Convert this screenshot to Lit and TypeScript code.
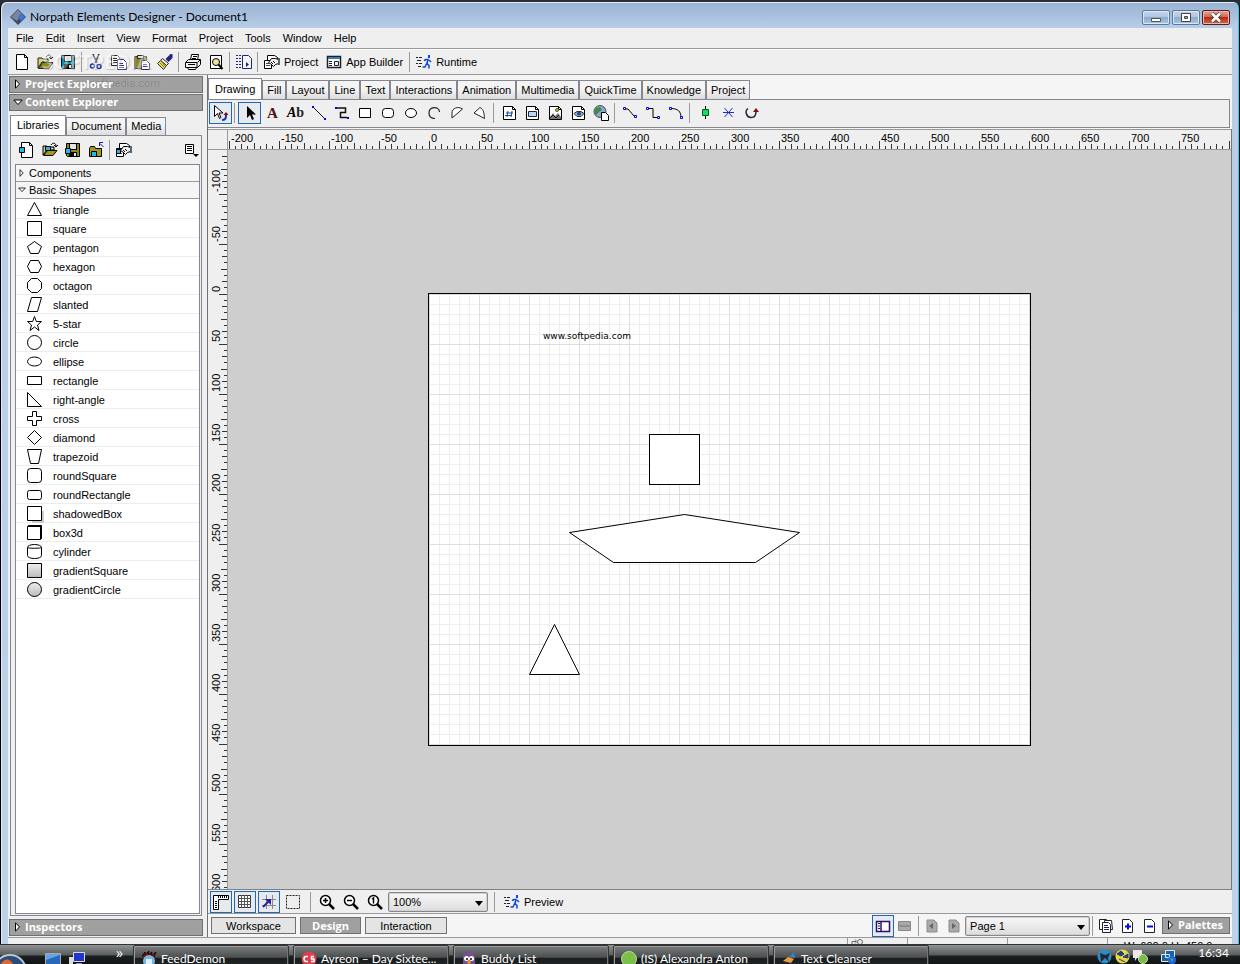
import { LitElement, html, svg, css } from "lit";
import { customElement, property } from "lit/decorators.js";

const page = svg`<path d="M2.5 .5h8l3 3v12h-11z" fill="#fff" stroke="#000"/><path d="M10.5 .5v3h3" fill="none" stroke="#000"/>`;
const floppy = (side: string) => svg`<path d="M1.500 1.500h13v13h-12l-1-1z" fill=${side} stroke="#000"/><path d="M4 1h8v7H4z" fill="#000"/><path d="M5 2h6v5H5z" fill="#e4e4e4"/><path d="M4 10h8v5H4z" fill="#000"/><path d="M9 11h2v3H9z" fill="#e4e4e4"/>`;
const lens = svg`<circle cx="6.5" cy="6.5" r="5" fill="#fff" stroke="#000" stroke-width="1.5"/><path d="M10 10l5 5" stroke="#000" stroke-width="2.5"/>`;
const runner = svg`<path d="M0 3.5h2m1 0h3M1 6.5h4M0 9.5h2m1 0h3M2 12.5h3" stroke="#222"/><path d="M12 1h2v3h-2z" fill="#0a46d8"/><path d="M8 6.500l2-1h2l-1 4 2 2v3M11 9l-2 4H6.500M13 6l2 2" fill="none" stroke="#0a46d8" stroke-width="1.500"/>`;
const handPages = svg`<path d="M3.500 6V1.500h7l3 2V9" fill="#fff" stroke="#000"/><path d="M.5 6.500h7v8h-7z" fill="#fff" stroke="#000"/><path d="M2 9.500h3M2 11.500h4" stroke="#444"/><path d="M4.500 8.500l3-4h4l3 1v4l-3 1-2 2-2-2z" fill="#eee" stroke="#000"/><path d="M7 8l2 2M9 7l2 2" stroke="#000"/><path d="M14 4h2v7h-2z" fill="#4a6a7c"/>`;
const sheet = svg`<path d="M2.500 1.500h9l3 3v10h-12z" fill="#fff" stroke="#000"/><path d="M11.500 1.500v3h3" fill="none" stroke="#000"/>`;

const ICONS: Record<string, unknown> = {
  newDoc: page,
  open: svg`<path d="M1 14V4h4l1 1h5v3H5z" fill="#d9cf75" stroke="#222"/><path d="M1.500 14.500l4-6H16l-4 6z" fill="#8a8a1c" stroke="#222"/><path d="M9 3c2-3 5-2 5 1m-2-1l2 2 2-2" fill="none" stroke="#000"/>`,
  save: floppy("#0b8ea5"),
  cut: svg`<path d="M5 0l4 9M11 0L7 9" stroke="#223" stroke-width="1.500" fill="none"/><circle cx="4.500" cy="12" r="2" fill="none" stroke="#2030a8" stroke-width="1.500"/><circle cx="11" cy="12.500" r="2" fill="none" stroke="#2030a8" stroke-width="1.500"/>`,
  copy: svg`<path d="M.5 1.500h6l2 2v8h-8z" fill="#fff" stroke="#222"/><path d="M2 4.500h4M2 6.500h4M2 8.500h4" stroke="#222"/><path d="M6.500 5.500h6l3 3v7h-9z" fill="#fff" stroke="#24247c"/><path d="M8 9.500h4M8 11.500h5M8 13.500h5" stroke="#24247c"/>`,
  paste: svg`<path d="M.5 2.500h12v12H.5z" fill="#8c8426" stroke="#333"/><path d="M3.500 1.500h6v3h-6z" fill="#ddd" stroke="#222"/><path d="M7.500 6.500h5l3 3v6h-8z" fill="#fff" stroke="#24247c"/><path d="M9 10.500h4M9 12.500h5" stroke="#24247c"/>`,
  brush: svg`<path d="M15.500 0v4l-4 4-3-3 5-5z" fill="#24247c"/><path d="M5.500 4.500l6 5-2 2-6-5z" fill="#eee" stroke="#222"/><path d="M3.500 6.500l6 5-3 4-6-6z" fill="#e8dc4c" stroke="#333"/><path d="M3 9l4 4M5 8l3 4" stroke="#8a8020"/>`,
  print: svg`<path d="M5.500 6.500l1-6h7l-1 6z" fill="#fff" stroke="#000"/><path d="M8 2.500h4M7 4.500h4" stroke="#000"/><path d="M.5 8.500l3-3h12v5l-3 3H.5z" fill="#f2f2f2" stroke="#000"/><path d="M1 8.500h11v5M12.500 8.500l3-3M3 10.500h7" fill="none" stroke="#000"/><path d="M2.500 13.500h9l-1 2h-7z" fill="#fff" stroke="#000"/>`,
  preview: svg`<path d="M2.500 1.500h11v13h-11z" fill="#fff" stroke="#000"/><circle cx="8" cy="8" r="3.500" fill="#e9e4a0" stroke="#000"/><path d="M10.500 10.500l4 4.500" stroke="#000" stroke-width="2"/>`,
  pages: svg`<path d="M0 1.500h6M0 4.500h6M0 7.500h6M0 10.500h6M0 13.500h6" stroke="#1b2a6b" stroke-dasharray="2 1"/><path d="M6.500 1.500h6l3 3v10h-9z" fill="#f3f5fb" stroke="#1b2a6b"/><path d="M10 8v5l3-2.500z" fill="#1b2a6b"/>`,
  project: handPages,
  appBuilder: svg`<path d="M1.500 2.500h13v11h-13z" fill="#fff" stroke="#16202e" stroke-width="1.500"/><path d="M2 4h12" stroke="#3c78a8" stroke-width="2"/><path d="M3 7.500h3M3 9.500h3M3 11.500h3" stroke="#222"/><path d="M8.500 7.500h4v4h-4z" fill="#eee" stroke="#222"/>`,
  runtime: runner,
  multi: svg`<path d="M1.500 .5v11l3-3 2 5 1.500-1-2-4.500h4z" fill="#fff" stroke="#000"/><path d="M9 15c4 0 4-2 4-6" fill="none" stroke="#1a2ca8" stroke-width="2"/><path d="M10.500 10L13 7l2.500 3z" fill="#7a1010"/>`,
  arrow: svg`<path d="M5 1v12l3-3 2 5 2-1-2-4.500h4z" fill="#000"/>`,
  line: svg`<path d="M2 2l12 12" stroke="#111"/><path d="M1 1h2v2H1zM13 13h2v2h-2z" fill="#00e"/>`,
  poly: svg`<path d="M2 3h9.500v4.500h-5v5H13" fill="none" stroke="#111" stroke-width="1.500"/><path d="M1 2h2v2H1zM13 12h2v2h-2z" fill="#00e"/>`,
  rect: svg`<path d="M2.500 3.500h11v9h-11z" fill="#fff" stroke="#000"/>`,
  rrect: svg`<rect x="2.500" y="3.500" width="11" height="9" rx="3" fill="#fff" stroke="#000"/>`,
  ellipse: svg`<ellipse cx="8" cy="8" rx="5.500" ry="4.500" fill="#fff" stroke="#000"/>`,
  arc: svg`<path d="M13.500 7c0-6-10.500-6-10.500 1 0 4 3 5.500 6 5.500" fill="none" stroke="#222" stroke-width="1.200"/>`,
  pie: svg`<path d="M3 13V8c0-5 6-7 10.500-4z" fill="#fff" stroke="#222"/>`,
  wedge: svg`<path d="M2 8l6-5.500c4 2 4 6 4.500 11z" fill="#fff" stroke="#222"/>`,
  hash: svg`${sheet}<path d="M7 6l-1 6M11 6l-1 6M5 8h7M4 10.500h7" stroke="#1c4d94"/>`,
  frame: svg`${sheet}<path d="M4.500 6.500h8v5h-8z" fill="#b9d6f2" stroke="#1b2a40"/>`,
  image: svg`${sheet}<path d="M3 12l3-4 2 3 3-3 3 4v2H3z" fill="#777"/><circle cx="10" cy="5" r="1.500" fill="#e8d400" stroke="#554"/><path d="M3 13l3-3 3 3 3-3" stroke="#111" fill="none"/>`,
  media: svg`${sheet}<path d="M4 8.500l3-2h4l3 2-3 3H7z" fill="#8cb89c" stroke="#333"/><circle cx="9" cy="8.500" r="2" fill="#2446b8"/>`,
  web: svg`<circle cx="7" cy="6.500" r="6" fill="#8ca8c8" stroke="#44525c"/><path d="M3 3l4-1 2 3-3 2-3 3-2-3zM9 8l3-1-2 4z" fill="#3d8a4c"/><path d="M8.500 7.500h4l3 3v5h-7z" fill="#fff" stroke="#000"/>`,
  connect1: svg`<path d="M3 4h3l6 7h2" fill="none" stroke="#000"/><path d="M1.500 2.500h2v2h-2zM12.500 10.500h2v2h-2z" fill="#fff" stroke="#00e"/>`,
  connect2: svg`<path d="M3 3.500h5v9h5" fill="none" stroke="#000"/><path d="M1.500 2.500h2v2h-2zM12.500 11.500h2v2h-2z" fill="#fff" stroke="#00e"/>`,
  connect3: svg`<path d="M3 3.500c7 0 10 3 10 9" fill="none" stroke="#000"/><path d="M1.500 2.500h2v2h-2zM12.500 11.500h2v2h-2z" fill="#fff" stroke="#00e"/>`,
  nodeGreen: svg`<path d="M8.500 1v13" stroke="#000"/><path d="M5.500 4.500h6v6h-6z" fill="#0be060" stroke="#035a24"/>`,
  star: svg`<path d="M3 7.500h11M4.500 3l8 9m0-9l-8 9" stroke="#1a2cc8"/>`,
  rotate: svg`<path d="M5 3.500c-4 3-1 9 3 9s5-3 5-6" fill="none" stroke="#33203c" stroke-width="1.500"/><path d="M10 7l3-4 3 4z" fill="#7a1010"/>`,
  libNew: svg`${page}<path d="M.5 5.500h5v5h-5z" fill="#22b8e8" stroke="#000"/>`,
  libOpen: svg`<path d="M1 13V4h4l1 1h6v3H5z" fill="#d9cf75" stroke="#000"/><path d="M1.500 13.500l4-5H15l-4 5z" fill="#a09a1c" stroke="#000"/><path d="M9 3c2-3 5-2 5 1m-2-1l2 2 2-2" fill="none" stroke="#000"/><path d="M3.500 4.500h5v4h-5z" fill="#22b8e8" stroke="#000"/>`,
  libSave: svg`${floppy("#8a8a1c")}<path d="M.5 6.500h5v5h-5z" fill="#22b8e8" stroke="#000"/>`,
  libUp: svg`<path d="M1.500 6.500l1-2h4l1 2h6v8h-12z" fill="#a09a1c" stroke="#000"/><path d="M3.500 9.500h5v5h-5z" fill="#22b8e8" stroke="#000"/><path d="M15.500 5L12 1.500M11.500 4V.5H15" fill="none" stroke="#1a1aa8"/>`,
  libProject: svg`${handPages}<path d="M.5 7.500h4v4h-4z" fill="#22b8e8" stroke="#000"/>`,
  options: svg`<path d="M2.500 2.500h8v9h-8z" fill="#fff" stroke="#000"/><path d="M4 4.500h5M4 6.500h5M4 8.500h5" stroke="#000"/><path d="M10 12h6l-3 3z" fill="#000"/>`,
  rulers: svg`<path d="M.5 1.500h15v4h-10v10h-5z" fill="#fff" stroke="#000"/><path d="M5.500 2v2m2-2v2m2-2v2m2-2v2m2-2v2M2 7.500h2M2 9.500h2M2 11.500h2M2 13.500h2" stroke="#000"/>`,
  grid: svg`<path d="M1.500 1.500h12v12h-12z" fill="#fff" stroke="#333"/><path d="M4.500 1v13m3-13v13m3-13v13M1 4.500h13M1 7.500h13M1 10.500h13" stroke="#555"/>`,
  snap: svg`<path d="M5.500 1v14M11.500 1v14M1 5.500h14M1 11.500h14" stroke="#888"/><path d="M2 13l7-7" stroke="#2a1fa0" stroke-width="2"/><path d="M4 5h6v6z" fill="#2a1fa0"/>`,
  dotted: svg`<path d="M1.500 1.500h13v13h-13z" fill="none" stroke="#222" stroke-dasharray="2 1"/>`,
  zoomIn: svg`${lens}<path d="M4 6.500h5M6.500 4v5" stroke="#000" stroke-width="1.500"/>`,
  zoomOut: svg`${lens}<path d="M4 6.500h5" stroke="#000" stroke-width="1.500"/>`,
  zoomOne: svg`${lens}<path d="M5 5l1.500-1v5.500" fill="none" stroke="#000" stroke-width="1.500"/>`,
  split: svg`<path d="M1.500 3.500h13v10h-13z" fill="#fff" stroke="#2d0f68" stroke-width="1.500"/><path d="M6 3v11" stroke="#2d0f68" stroke-width="1.500"/><path d="M3 5.500h2M3 8h2M3 10.500h2" stroke="#2d0f68"/>`,
  stack: svg`<path d="M1.500 3.500h12v9h-12z" fill="#aaa" stroke="#888"/><path d="M2 8h11" stroke="#777"/>`,
  prevPage: svg`<path d="M3 2h7l3 3v9H3z" fill="#aaa" stroke="#8c8c8c"/><path d="M9 5v6L5 8z" fill="#666"/>`,
  nextPage: svg`<path d="M3 2h7l3 3v9H3z" fill="#aaa" stroke="#8c8c8c"/><path d="M6 5v6l4-3z" fill="#666"/>`,
  dupPage: svg`<path d="M1.500 1.500h7v10h-7z" fill="#fff" stroke="#222"/><path d="M6.500 2.500h7l1 9h-8z" fill="#fff" stroke="#222"/><path d="M4.500 4.500h6l2 2v8h-8z" fill="#fff" stroke="#222"/><path d="M6 7.500h4M6 9.500h5M6 11.500h5" stroke="#1a1a90"/>`,
  addPage: svg`<path d="M2.500 1.500h7l3 3v10h-10z" fill="#fff" stroke="#222"/><path d="M5 8.500h6M8 5.500v6" stroke="#0a0ad0" stroke-width="2"/>`,
  delPage: svg`<path d="M2.500 1.500h7l3 3v10h-10z" fill="#fff" stroke="#222"/><path d="M5 8.500h6" stroke="#0a0ad0" stroke-width="2"/>`,
  tri: svg`<path d="M7.500 .5l7 13H.5z"/>`,
  square: svg`<path d="M.5 .5h14v14H.5z"/>`,
  pentagon: svg`<path d="M7.500 1.500l7 5-3 7h-8l-3-7z"/>`,
  hexagon: svg`<path d="M3.500 1.500h8l3 6-3 6h-8l-3-6z"/>`,
  octagon: svg`<path d="M4.500 .5h6l4 4v6l-4 4h-6l-4-4v-6z"/>`,
  slanted: svg`<path d="M4.500 .5h10l-4 14H.5z"/>`,
  fiveStar: svg`<path d="M7.500 .5l1.800 5h5.200l-4 3.500 1.500 5.500-4.500-3.500-4.500 3.500 1.500-5.500-4-3.500h5.200z"/>`,
  circle: svg`<circle cx="7.500" cy="7.500" r="7"/>`,
  oval: svg`<ellipse cx="7.500" cy="7.500" rx="7" ry="4.500"/>`,
  rectangle: svg`<path d="M.5 3.500h14v8H.5z"/>`,
  rightAngle: svg`<path d="M.5 .5l14 14H.5z"/>`,
  cross: svg`<path d="M5.500 .5h4v5h5v4h-5v5h-4v-5h-5v-4h5z"/>`,
  diamond: svg`<path d="M7.500 .5l7 7-7 7-7-7z"/>`,
  trapezoid: svg`<path d="M.5 .5h14l-3 14h-8z"/>`,
  roundSquare: svg`<rect x=".5" y=".5" width="14" height="14" rx="3"/>`,
  roundRect: svg`<rect x=".5" y="3.500" width="14" height="9" rx="2"/>`,
  shadowed: svg`<path d="M5 5h12v12H5z" fill="#ccc" stroke="none"/><path d="M.5 .5h14v14H.5z"/>`,
  box3d: svg`<path d="M.5 1.500l1-1h13v13l-1 1H.5z" fill="#000"/><path d="M1 2h12v12H1z" stroke="none"/>`,
  cylinder: svg`<path d="M.5 3.500c0-4 14-4 14 0v8c0 4-14 4-14 0z"/><path d="M.5 3.500c0 1 14 1 14 0" fill="none"/>`,
  gradSquare: svg`<defs><linearGradient id="a" x2="0" y2="1"><stop stop-color="#eee"/><stop offset="1" stop-color="#bbb"/></linearGradient></defs><path d="M.5 .5h14v14H.5z" fill="url(#a)"/>`,
  gradCircle: svg`<defs><linearGradient id="b" x2="0" y2="1"><stop stop-color="#eee"/><stop offset="1" stop-color="#bbb"/></linearGradient></defs><circle cx="7.500" cy="7.500" r="7" fill="url(#b)"/>`,
};

const icon = (name: string) =>
  html`<svg class="icon" viewBox="0 0 16 16" aria-hidden="true">${ICONS[name]}</svg>`;

const tool = (name: string, label: string, pressed = false) =>
  html`<button class="tool ${pressed ? "pressed" : ""}" aria-label=${label} title=${label}>${icon(name)}</button>`;

const sep = html`<span class="sep"></span>`;

const right = html`<svg class="chevron" viewBox="0 0 8 10" aria-hidden="true"><path d="M1.500 .8v8.400L5.500 5z"/></svg>`;
const down = html`<svg class="chevron wide" viewBox="0 0 10 7" aria-hidden="true"><path d="M.8 1h8.400L5 5.500z"/></svg>`;

const base = css`
  * { box-sizing: border-box; }
  button, select { font: inherit; color: inherit; margin: 0; padding: 0; border: 0; background: none; border-radius: 0; }
  .icon { width: 16px; height: 16px; display: block; flex: none; }
  .tool { width: 23px; height: 22px; display: flex; align-items: center; justify-content: center; flex: none; }
  .pressed { border: 1px solid #1c6ab4; background: #e6eaef; }
  .sep { width: 1px; height: 20px; background: #999; margin: 0 2px; flex: none; }
  .chevron { width: 8px; height: 10px; fill: #fff; stroke: #000; flex: none; }
  .wide { width: 10px; height: 7px; margin: 0 -1px; }
  .bar-head { display: flex; align-items: center; gap: 3px; height: 17px; padding: 0 4px 1px; background: #a0a0a0;
    border: 1px solid #707070; color: #fff; font: bold 11px/14px "Open Sans", sans-serif; white-space: nowrap; text-align: left; }
  .tabs { display: flex; align-items: flex-end; }
  .tab { height: 19px; padding: 0 4px; border: 1px solid #868690; border-bottom: 0; white-space: nowrap;
    background: linear-gradient(#f4f4f4 45%, #dcdcdc); line-height: 18px; }
  .tab.on { height: 21px; background: #fff; padding: 0 6px; }
`;

@customElement("side-panel")
class SidePanel extends LitElement {
  static styles = [base, css`
    :host { display: flex; flex-direction: column; width: 199px; flex: none; padding: 1px 4px 1px 1px; gap: 1px; background: #efefef; }
    .stamp { position: absolute; left: 54px; top: 49px; font: 11px/14px Roboto, sans-serif; color: #858585; text-shadow: 0 0 1px #bbb; pointer-events: none; }
    .head-text { position: relative; z-index: 1; }
    .libs { flex: 1; min-height: 0; display: flex; flex-direction: column; padding: 3px 1px 2px; }
    .tab { height: 18px; line-height: 17px; }
    .tab.on { height: 20px; }
    .box { flex: 1; min-height: 0; display: flex; flex-direction: column; border: 1px solid #868690; padding: 3px 1px 1px 4px; }
    .tools { display: flex; align-items: center; height: 22px; margin-bottom: 3px; }
    .tools .sep { margin: 0 2px; }
    .end { margin-left: auto; margin-right: -2px; }
    .tree { flex: 1; min-height: 0; overflow: hidden; border: 1px solid #868690; background: #fff; margin: 0; padding: 0; list-style: none; }
    .group { display: flex; align-items: center; gap: 3px; width: 100%; height: 17px; padding: 0 2px; border-bottom: 1px solid #999; background: #f5f5f5; text-align: left; }
    .group .chevron { width: 8px; height: 8px; margin: 0; }
    .items { list-style: none; margin: 0; padding: 1px 0 0; }
    .item { display: flex; align-items: center; gap: 10px; height: 19px; padding: 2px 10px 0; border-bottom: 1px solid #ededf0; }
    .shape { width: 17px; height: 17px; margin-bottom: 2px; fill: #fff; stroke: #000; flex: none; overflow: visible; }
  `];

  private shapes: [string, string][] = [
    ["tri", "triangle"], ["square", "square"], ["pentagon", "pentagon"], ["hexagon", "hexagon"], ["octagon", "octagon"],
    ["slanted", "slanted"], ["fiveStar", "5-star"], ["circle", "circle"], ["oval", "ellipse"], ["rectangle", "rectangle"],
    ["rightAngle", "right-angle"], ["cross", "cross"], ["diamond", "diamond"], ["trapezoid", "trapezoid"],
    ["roundSquare", "roundSquare"], ["roundRect", "roundRectangle"], ["shadowed", "shadowedBox"], ["box3d", "box3d"],
    ["cylinder", "cylinder"], ["gradSquare", "gradientSquare"], ["gradCircle", "gradientCircle"],
  ];

  render() {
    return html`
      <button class="bar-head">${right}<span class="head-text">Project Explorer</span></button>
      <span class="stamp">www.softpedia.com</span>
      <button class="bar-head">${down}Content Explorer</button>
      <div class="libs">
        <div class="tabs">
          <button class="tab on">Libraries</button><button class="tab">Document</button><button class="tab">Media</button>
        </div>
        <div class="box">
          <div class="tools">
            ${tool("libNew", "New library")}${tool("libOpen", "Open library")}${tool("libSave", "Save library")}${tool("libUp", "Close library")}
            ${sep}${tool("libProject", "Library project")}
            <button class="tool end" aria-label="Options">${icon("options")}</button>
          </div>
          <ul class="tree">
            <li><button class="group">${right}Components</button></li>
            <li><button class="group">${down}Basic Shapes</button>
              <ul class="items">
                ${this.shapes.map(([i, name]) => html`<li class="item"><svg class="shape" viewBox="-1 -1 17 17" aria-hidden="true">${ICONS[i]}</svg>${name}</li>`)}
              </ul>
            </li>
          </ul>
        </div>
      </div>
      <button class="bar-head">${right}Inspectors</button>
    `;
  }
}

@customElement("ruler-strip")
class RulerStrip extends LitElement {
  @property({ type: Boolean }) vertical = false;
  @property({ type: Number }) origin = 0;
  @property({ type: Number }) from = 0;
  @property({ type: Number }) to = 0;

  static styles = css`
    :host { display: block; overflow: hidden; background: #efefef; }
    .scale { display: block; width: 100%; height: 100%; }
    .num { font: 11px "Liberation Sans", sans-serif; fill: #000; }
    .tick { stroke: #333; shape-rendering: crispEdges; }
  `;

  render() {
    const ticks = [];
    const first = Math.ceil(this.from / 6.25);
    const last = Math.floor(this.to / 6.25);
    for (let k = first; k <= last; k++) {
      const len = k % 8 === 0 ? 8 : k % 4 === 0 ? 6 : k % 2 === 0 ? 5 : 3;
      const p = this.origin + Math.floor(k * 6.25) + 0.5;
      ticks.push(this.vertical
        ? svg`<line class="tick" x1=${19 - len} x2="19" y1=${p} y2=${p}/>`
        : svg`<line class="tick" y1=${19 - len} y2="19" x1=${p} x2=${p}/>`);
    }
    const labels = [];
    for (let v = Math.ceil(this.from / 50) * 50; v <= Math.min(this.to, this.vertical ? 600 : 750); v += 50) {
      const p = this.origin + v;
      labels.push(this.vertical
        ? svg`<text class="num" transform="translate(12 ${p - 2}) rotate(-90)">${v}</text>`
        : svg`<text class="num" x=${p + 2} y="12">${v}</text>`);
    }
    return html`<svg class="scale">${ticks}${labels}</svg>`;
  }
}

@customElement("drawing-area")
class DrawingArea extends LitElement {
  static styles = [base, css`
    :host { display: grid; grid-template: 21px 1fr / 20px 1fr; flex: 1; min-height: 0; border-right: 1px solid #777; border-bottom: 1px solid #808080; overflow: hidden; }
    .corner, .top { border-top: 1px solid #999; border-bottom: 1px solid #999; background: #efefef; }
    .corner, .left { border-right: 1px solid #999; }
    .desk { background: #cecece; overflow: hidden; min-height: 0; }
    .sheet { margin: 143px 0 0 200px; width: 603px; height: 453px; border: 1px solid #000; background-color: #fff;
      background-image: linear-gradient(90deg, #dedede 1px, transparent 1px), linear-gradient(#dedede 1px, transparent 1px),
        linear-gradient(90deg, #eeeeee 1px, transparent 1px), linear-gradient(#eeeeee 1px, transparent 1px);
      background-size: 50px 50px, 50px 50px, 10px 10px, 10px 10px; }
    .art { display: block; width: 601px; height: 451px; fill: #fff; stroke: #000; }
    .note { font: 9px "DejaVu Sans", sans-serif; fill: #000; stroke: none; }
  `];
  render() {
    return html`
      <div class="corner"></div>
      <ruler-strip class="top" .origin=${201} .from=${-200} .to=${800}></ruler-strip>
      <ruler-strip class="left" vertical .origin=${144} .from=${-143} .to=${600}></ruler-strip>
      <div class="desk">
        <div class="sheet">
          <svg class="art">
            <text class="note" x="114" y="45">www.softpedia.com</text>
            <rect x="220.500" y="140.500" width="50" height="50"/>
            <path d="M140.500 238.500L255.500 220.500L370.500 238.500L326.500 268.500H184.500z"/>
            <path d="M125.500 330.500L150.500 380.500H100.500z"/>
          </svg>
        </div>
      </div>`;
  }
}

@customElement("task-bar")
class TaskBar extends LitElement {
  static styles = [base, css`
    :host { display: flex; height: 20px; flex: none; overflow: hidden; border-top: 1px solid #333; color: #fff; align-items: flex-start;
      font: 12px/16px Lato, sans-serif; background: linear-gradient(#909394, #5c5f60 50%, #1b1f20 60%, #101414); }
    .start { width: 45px; height: 19px; flex: none; text-align: left; }
    .quick { width: 88px; display: flex; gap: 8px; padding-top: 6px; flex: none; }
    .more { margin: -5px 0 0 23px; font: 14px/14px "Open Sans", sans-serif; }
    .tasks { display: flex; gap: 4px; flex: 1; min-width: 0; }
    .task { width: 156px; height: 30px; display: flex; align-items: flex-start; gap: 4px; padding: 5px 7px; white-space: nowrap; border: 1px solid #333; border-radius: 2px;
      box-shadow: inset 1px 1px 0 #9a9d9e, inset -1px 0 0 #777; background: linear-gradient(#7b7e7f, #4c4f50 40%, #191d1e 45%, #2c2f30); }
    .glyph { display: block; flex: none; }
    .tray { display: flex; gap: 3px; padding-top: 4px; margin-right: 22px; }
    .gap { width: 7px; }
    .clock { padding: 0 11px 0 0; }
  `];
  private tasks: [string, unknown][] = [
    ["FeedDemon", svg`<path d="M1 5l3-4v3l4-4-1 4 4-3-1 4 5-4-2 5z" fill="#a01818" stroke="#200"/><circle cx="8" cy="10" r="6" fill="#78b8dc"/><path d="M5 8h6v5H5z" fill="#dff0fa"/>`],
    ["Ayreon – Day Sixtee...", svg`<circle cx="8" cy="8" r="7.500" fill="#dc4050"/><path d="M7 5.500H5a2 2.500 0 000 5h2M13 5.500h-2.500v2.500H13v2.500H10" stroke="#fff" fill="none" stroke-width="1.500"/>`],
    ["Buddy List", svg`<path d="M2 16V5c0-6 12-6 12 0v11z" fill="#74508c"/><circle cx="5.500" cy="7.500" r="2.500" fill="#fff"/><circle cx="10.500" cy="7.500" r="2.500" fill="#fff"/><circle cx="6" cy="8" r="1"/><circle cx="10" cy="8" r="1"/><path d="M6 11l2-2 2 2-2 3z" fill="#e8982c"/>`],
    ["(IS) Alexandra Anton", svg`<circle cx="8" cy="8" r="7.500" fill="#7cc04c" stroke="#b8e090"/>`],
    ["Text Cleanser", svg`<path d="M8 6l5-5 1 6z" fill="#3c80c8"/><path d="M2 10l5-4 6 2-3 4z" fill="#ec9c3c"/><path d="M2 12h10v2z" fill="#102860"/>`],
  ];
  render() {
    return html`
      <button class="start" aria-label="Start"><svg class="glyph" width="28" height="20" viewBox="0 0 28 20"><circle cx="10" cy="26" r="16" fill="#2c4c78" stroke="#b8c4d0" stroke-width="2"/><path d="M1 19c3-6 9-6 12 0z" fill="#e06830"/></svg></button>
      <div class="quick">
        <svg class="glyph" width="16" height="16" viewBox="0 0 16 16"><path d="M.5 2.500h15v12H.5z" fill="#2868b8" stroke="#aaa"/><path d="M1 9l14-5v-1H1z" fill="#64a4e8"/></svg>
        <svg class="glyph" width="16" height="16" viewBox="0 0 16 16"><path d="M4.500 1.500h11v9h-11z" fill="#1c38d0" stroke="#ddd"/><path d="M0 6h4v8H0z" fill="#ddd"/><path d="M7 12h6v3H7z" fill="#999"/></svg>
        <span class="more">»</span>
      </div>
      <div class="tasks">
        ${this.tasks.map(([name, art]) => html`<button class="task"><svg class="glyph" width="16" height="16" viewBox="0 0 16 16">${art}</svg>${name}</button>`)}
      </div>
      <div class="tray">
        <svg class="glyph" width="15" height="15" viewBox="0 0 15 15"><circle cx="7.500" cy="7.500" r="7" fill="#2c8cc8"/><path d="M3 4l5 2 5-2-2 5 1 4-4-4-4 4z" fill="#202830"/></svg>
        <svg class="glyph" width="15" height="15" viewBox="0 0 15 15"><circle cx="7.500" cy="7.500" r="7" fill="#e8d83c"/><path d="M2 5l4-3 3 3-3 2zM8 8l5-3v4zM4 10l6 3" fill="#203c8c" stroke="#203c8c"/></svg>
        <svg class="glyph" width="15" height="15" viewBox="0 0 15 15"><path d="M0 1h9v8H4l-2 3V9H0z" fill="#e8e8e8"/><circle cx="10" cy="10" r="4.500" fill="#78bc4c" stroke="#c4e4a8"/></svg>
        <span class="gap"></span>
        <svg class="glyph" width="15" height="15" viewBox="0 0 15 15"><path d="M4.500 1.500h9v7h-9zM.5 5.500h8v7h-8z" fill="#1464a8" stroke="#e0e8f0"/><circle cx="11" cy="11" r="4" fill="#2464dc"/><path d="M9 9l3 1-1 3z" fill="#3cc04c"/></svg>
      </div>
      <time class="clock">16:34</time>`;
  }
}

@customElement("app-root")
class AppRoot extends LitElement {
  static styles = [base, css`
    :host { display: flex; flex-direction: column; height: 100vh; overflow: hidden; background: #2c2c34; color: #000; font: 11px/14px "Liberation Sans", Arial, sans-serif; }
    .window { flex: 1; min-height: 0; display: flex; flex-direction: column; margin-top: 2px; border-left: 1px solid #000; border-right: 1px solid #000;
      border-radius: 6px 6px 0 0; background: linear-gradient(#98b2d2, #b8cee8 26px, #bcd2eb); box-shadow: inset -1px 0 0 #22d0f0, inset 1px 1px 0 #dfeaf6; padding: 0 7px; }
    .title { display: flex; align-items: center; height: 26px; flex: none; gap: 4px; padding: 4px 2px 0; font: 12px/18px Lato, sans-serif; }
    .title h1 { font: inherit; margin: 0; flex: 1; }
    .logo { width: 16px; height: 16px; }
    .winbtns { display: flex; gap: 2px; }
    .wb { width: 28px; height: 15px; border: 1px solid #5d7796; border-radius: 2px; background: linear-gradient(#c3d5ea, #b0c6e0 45%, #8daccf 50%, #a9c6e4); box-shadow: inset 0 0 0 1px #dbe8f5; display: grid; place-items: center; }
    .close { background: linear-gradient(#e2a596, #cf6a55 45%, #b52a12 50%, #cf6a4c); border-color: #5c1a18; box-shadow: inset 0 0 0 1px #eab8ac; }
    .body { flex: 1; min-height: 0; display: flex; flex-direction: column; background: #efefef; position: relative; }
    .menu { display: flex; height: 21px; padding: 0 2px; border-bottom: 1px solid #999; flex: none; }
    .menu button { padding: 0 6px; height: 20px; }
    .toolbar { display: flex; align-items: center; height: 26px; padding: 1px 2px; border-bottom: 1px solid #999; box-shadow: inset 0 1px 0 #fff; flex: none; }
    .texttool { display: flex; align-items: center; gap: 4px; padding: 0 4px; white-space: nowrap; }
    .mark { position: absolute; left: 34px; top: 23px; font: bold 20px/22px "Open Sans", sans-serif; color: #fff; opacity: .4; text-shadow: 1px 1px 1px #888; pointer-events: none; }
    .main { flex: 1; min-height: 0; display: flex; }
    .work { flex: 1; min-width: 0; display: flex; flex-direction: column; border-left: 1px solid #707070; background: #f5f5f5; }
    .work .tabs { padding-top: 3px; height: 24px; flex: none; }
    .draw { display: flex; align-items: center; height: 29px; margin-right: 2px; margin-bottom: 1px; padding: 0 1px 1px; border: 1px solid #868690; border-left: 0; background: #efefef; flex: none; }
    .draw .sep { margin: 0 3px 0 2px; }
    .letter { font: bold 15px/16px "Liberation Serif", serif; color: #4a1414; }
    .slant { font: bold 14px/16px "Liberation Serif", serif; color: #222; }
    .slant i { color: #000; }
    .view { display: flex; align-items: center; height: 24px; padding: 0 2px; gap: 2px; border-bottom: 1px solid #999; background: #efefef; flex: none; }
    .view .tool, .modes .tool { width: 22px; }
    .view .sep { margin: 0 3px 0 4px; }
    .combo { appearance: none; height: 20px; border: 1px solid #868690; border-radius: 2px; padding: 0 4px; box-shadow: inset 0 0 0 1px #d0d0d0;
      background: linear-gradient(#f8f8f8, #dcdcdc); }
    .pick { position: relative; display: flex; }
    .pick svg { position: absolute; right: 5px; top: 9px; width: 8px; height: 5px; pointer-events: none; }
    .zoom { width: 100px; }
    .pages { width: 125px; }
    .modes { display: flex; align-items: center; height: 23px; padding: 0 2px 0 3px; flex: none; }
    .mode { height: 17px; border: 1px solid #707070; background: #e4e4e4; margin-right: 4px; }
    .m1 { width: 85px; } .m2 { width: 61px; } .m3 { width: 82px; }
    .mode.on { background: #a0a0a0; color: #fff; font: bold 11px/14px "Open Sans", sans-serif; }
    .push { margin-left: auto; }
    .modes .sep { margin: 0 2px; }
    .modes .bar-head { margin-left: 1px; padding-right: 6px; }
    .status { display: flex; height: 7px; border-top: 1px solid #999; overflow: hidden; flex: none; line-height: 16px; }
    .cell { width: 100px; border-left: 1px solid #999; white-space: nowrap; flex: none; }
    .lock { width: 60px; margin-left: auto; padding-left: 3px; }
    .lock svg { display: block; }
    .size { width: 125px; padding-left: 16px; }
  `];

  render() {
    return html`
      <div class="window">
        <header class="title">
          <svg class="logo" viewBox="0 0 16 16" aria-hidden="true"><path d="M8 0l8 8-8 8-8-8z" fill="#414a5c"/><path d="M8 1l4 4-5 7-6-4z" fill="#7c8698"/><path d="M11 4l4 4-4 4-3-4z" fill="#3c74d8"/></svg>
          <h1>Norpath Elements Designer - Document1</h1>
          <div class="winbtns">
            <button class="wb" aria-label="Minimize"><svg width="12" height="11"><path d="M1.500 6.500h9v3h-9z" fill="#fff" stroke="#555"/></svg></button>
            <button class="wb" aria-label="Maximize"><svg width="12" height="11"><path d="M1.500 1.500h9v8h-9z" fill="#fff" stroke="#444"/><path d="M4.500 4.500h3v2h-3z" fill="#9bb6d6" stroke="#444"/></svg></button>
            <button class="wb close" aria-label="Close"><svg width="12" height="11"><path d="M2 1.500l8 8m0-8l-8 8" stroke="#444" stroke-width="4"/><path d="M2 1.500l8 8m0-8l-8 8" stroke="#fff" stroke-width="2.500"/></svg></button>
          </div>
        </header>
        <div class="body">
          <nav class="menu">${["File", "Edit", "Insert", "View", "Format", "Project", "Tools", "Window", "Help"].map((m) => html`<button>${m}</button>`)}</nav>
          <div class="toolbar">
            ${tool("newDoc", "New")}${tool("open", "Open")}${tool("save", "Save")}${sep}
            ${tool("cut", "Cut")}${tool("copy", "Copy")}${tool("paste", "Paste")}${tool("brush", "Format painter")}${sep}
            ${tool("print", "Print")}${tool("preview", "Print preview")}${sep}${tool("pages", "Pages")}${sep}
            <button class="texttool">${icon("project")}Project</button>
            <button class="texttool">${icon("appBuilder")}App Builder</button>${sep}
            <button class="texttool">${icon("runtime")}Runtime</button>
          </div>
          <span class="mark">SOFTPEDIA</span>
          <div class="main">
            <side-panel></side-panel>
            <section class="work">
              <div class="tabs">
                ${["Drawing", "Fill", "Layout", "Line", "Text", "Interactions", "Animation", "Multimedia", "QuickTime", "Knowledge", "Project"].map(
                  (t, i) => html`<button class="tab ${i === 0 ? "on" : ""}">${t}</button>`)}
              </div>
              <div class="draw">
                ${tool("multi", "Multi select", true)}${sep}${tool("arrow", "Select", true)}
                <button class="tool letter" aria-label="Text">A</button>
                <button class="tool slant" aria-label="Styled text"><i>A</i>b</button>
                ${tool("line", "Line")}${tool("poly", "Polyline")}${tool("rect", "Rectangle")}${tool("rrect", "Rounded rectangle")}${tool("ellipse", "Ellipse")}
                ${tool("arc", "Arc")}${tool("pie", "Pie")}${tool("wedge", "Wedge")}${sep}
                ${tool("hash", "Field")}${tool("frame", "Frame")}${tool("image", "Image")}${tool("media", "Media")}${tool("web", "Web")}${sep}
                ${tool("connect1", "Straight connector")}${tool("connect2", "Elbow connector")}${tool("connect3", "Curved connector")}${sep}
                ${tool("nodeGreen", "Node")}${tool("star", "Anchor")}${tool("rotate", "Rotate")}
              </div>
              <drawing-area></drawing-area>
              <div class="view">
                ${tool("rulers", "Rulers", true)}${tool("grid", "Grid", true)}${tool("snap", "Snap", true)}${tool("dotted", "Bounds")}${sep}
                ${tool("zoomIn", "Zoom in")}${tool("zoomOut", "Zoom out")}${tool("zoomOne", "Actual size")}
                <span class="pick"><select class="combo zoom" aria-label="Zoom"><option>100%</option></select><svg viewBox="0 0 8 5"><path d="M0 0h8L4 5z"/></svg></span>
                ${sep}<button class="texttool">${icon("runtime")}Preview</button>
              </div>
              <div class="modes">
                <button class="mode m1">Workspace</button><button class="mode on m2">Design</button><button class="mode m3">Interaction</button>
                <span class="push"></span>
                ${tool("split", "Side layout", true)}${tool("stack", "Stacked layout")}${sep}
                ${tool("prevPage", "Previous page")}${tool("nextPage", "Next page")}
                <span class="pick"><select class="combo pages" aria-label="Page"><option>Page 1</option></select><svg viewBox="0 0 8 5"><path d="M0 0h8L4 5z"/></svg></span>
                ${sep}${tool("dupPage", "Duplicate page")}${tool("addPage", "Add page")}${tool("delPage", "Delete page")}
                <button class="bar-head">${right}Palettes</button>
              </div>
            </section>
          </div>
          <footer class="status">
            <span class="cell lock"><svg width="14" height="8" viewBox="0 0 14 8" fill="none" stroke="#666"><path d="M1 6V3.500h4M4 1.500l2 2-2 2"/><circle cx="9" cy="4" r="2.500"/></svg></span>
            <span class="cell"></span><span class="cell"></span><span class="cell size">W: 600.0 H: 450.0</span>
          </footer>
        </div>
      </div>
      <task-bar></task-bar>`;
  }
}
